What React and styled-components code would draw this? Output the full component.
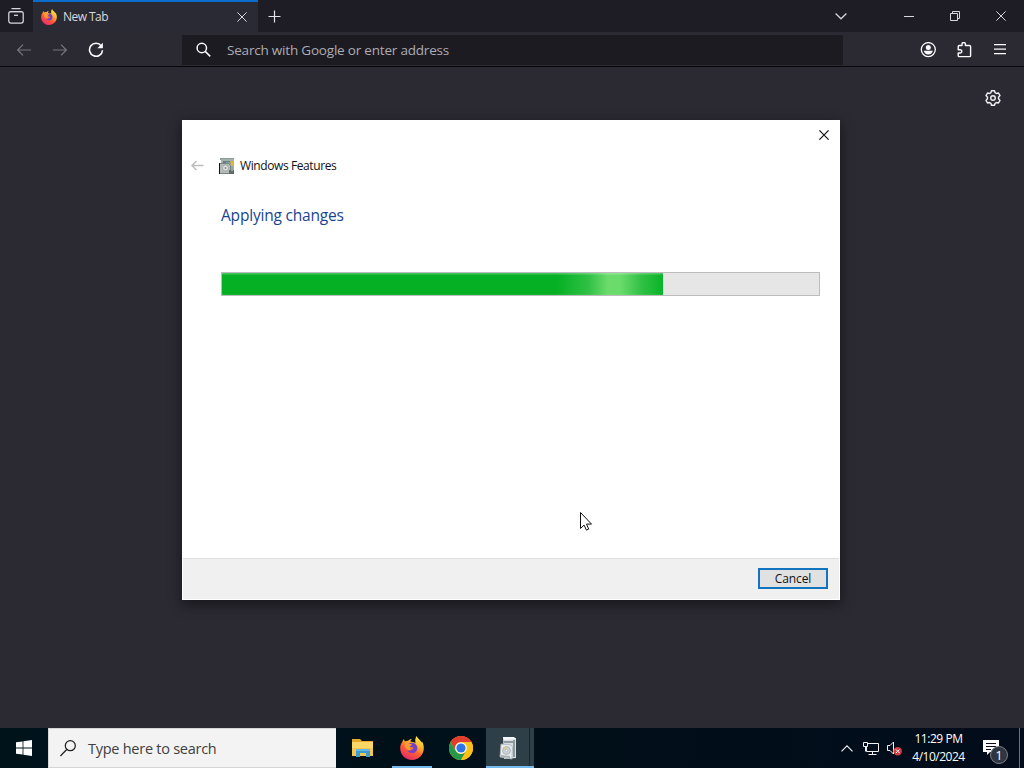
import React from 'react';
import styled, { createGlobalStyle } from 'styled-components';

const Global = createGlobalStyle`
  *, *::before, *::after { box-sizing: border-box; }
  html, body { margin: 0; padding: 0; background: #2b2a33; overflow: hidden; }
  body { font-family: "Open Sans", "Noto Sans", sans-serif; }
  svg { display: block; flex: none; }
  button { font: inherit; padding: 0; border: 0; background: none; color: inherit; }
`;

const Desktop = styled.div`
  position: relative;
  width: 1024px;
  height: 768px;
  display: flex;
  flex-direction: column;
  overflow: hidden;
  background: #2b2a33;
`;

const Label = styled.span`
  font-size: ${(p) => p.$size}px;
  line-height: ${(p) => p.$line || 16}px;
  letter-spacing: ${(p) => p.$track || 0}px;
  color: ${(p) => p.$color};
  white-space: nowrap;
`;

const IconButton = styled.button`
  width: ${(p) => p.$w}px;
  height: 100%;
  flex: none;
  display: flex;
  align-items: center;
  justify-content: center;
  color: ${(p) => p.$color || '#fbfbfe'};
`;

const Spacer = styled.div`
  flex: 1;
`;

const TabStrip = styled.div`
  height: 32px;
  display: flex;
  background: #1e1d25;
`;

const Tab = styled.div`
  width: 225px;
  display: flex;
  align-items: center;
  margin-left: 1px;
  padding: 0 8px 1px 8px;
  gap: 6px;
  background: #2a2a34;
  border-top: 2px solid #0a6ccb;
`;

const WindowControls = styled.div`
  display: flex;
  margin-left: 22px;
`;

const NavBar = styled.div`
  height: 35px;
  display: flex;
  align-items: center;
  padding: 2px 6px 0;
  background: #2b2a33;
  border-bottom: 1px solid #08080b;
`;

const AddressBar = styled.div`
  width: 661px;
  height: 30px;
  margin: 0 67px 0 68px;
  padding: 0 13px;
  display: flex;
  align-items: center;
  gap: 15px;
  color: #fbfbfe;
  background: #1c1b22;
`;

const Page = styled.main`
  flex: 1;
  display: flex;
  justify-content: flex-end;
  align-items: flex-start;
  padding: 22px 22px 0 0;
`;

const Dialog = styled.section`
  position: absolute;
  left: 182px;
  top: 120px;
  width: 658px;
  height: 480px;
  display: flex;
  flex-direction: column;
  background: #fff;
  border: 1px solid #fff;
  box-shadow: 0 4px 12px 1px rgba(0, 0, 0, 0.45);
`;

const DialogTop = styled.div`
  height: 28px;
  display: flex;
  justify-content: flex-end;
`;

const DialogHeader = styled.div`
  height: 34px;
  display: flex;
  align-items: center;
  padding-left: 7px;
`;

const DialogTitle = styled.div`
  display: flex;
  align-items: center;
  gap: 5px;
  margin-left: 15px;
`;

const DialogBody = styled.div`
  flex: 1;
  display: flex;
  flex-direction: column;
  padding: 20px 19px 0 38px;
`;

const Progress = styled.div`
  height: 24px;
  margin-top: 45px;
  background: #e6e6e6;
  border: 1px solid #bcbcbc;
`;

const ProgressFill = styled.div`
  width: 441px;
  height: 100%;
  background:
    linear-gradient(to bottom, rgba(255, 255, 255, 0.25) 0 1px, transparent 2px 21px, rgba(255, 255, 255, 0.12) 22px),
    linear-gradient(to right, #06b025 0 335px, #2fc044 366px, #6bdc6c 386px, #6bdc6c 398px, #2fc044 420px, #0ab428 441px);
`;

const DialogFooter = styled.div`
  height: 41px;
  display: flex;
  align-items: center;
  justify-content: flex-end;
  padding: 0 11px 1px 0;
  background: #f0f0f0;
  border-top: 1px solid #dfdfdf;
`;

const CancelButton = styled.button`
  width: 70px;
  height: 21px;
  display: flex;
  align-items: center;
  justify-content: center;
  background: #e1e1e1;
  border: 2px solid #1273be;
`;

const Cursor = styled.svg`
  position: absolute;
  left: 579px;
  top: 511px;
`;

const Taskbar = styled.footer`
  height: 40px;
  display: flex;
  background: linear-gradient(to right, #00131b, #010f19 60%, #020c1b);
`;

const SearchBox = styled.div`
  width: 288px;
  display: flex;
  align-items: center;
  gap: 12px;
  padding: 1px 0 0 11px;
  margin-right: 2px;
  background: #f3f3f3;
  border: 1px solid #d5d5d5;
  border-width: 1px 0 1px 1px;
`;

const TaskButton = styled.button`
  position: relative;
  width: ${(p) => p.$w || 49}px;
  display: flex;
  align-items: center;
  justify-content: center;
  padding-right: ${(p) => (p.$active ? 3 : 0)}px;
  background: ${(p) => (p.$active ? 'linear-gradient(to right, #2f3f48 43px, #16252e 43px 44px, #2f3f48 44px)' : 'none')};
  &::after {
    content: '';
    position: absolute;
    bottom: 0;
    left: ${(p) => (p.$active ? 0 : 5)}px;
    right: ${(p) => (p.$active ? 0 : 4)}px;
    height: 2px;
    background: ${(p) => (p.$running || p.$active ? '#76b9ed' : 'transparent')};
  }
`;

const Clock = styled.div`
  width: 67px;
  display: flex;
  flex-direction: column;
  align-items: center;
  padding-top: 2px;
`;

const Notifications = styled.div`
  position: relative;
  width: 47px;
  display: flex;
  padding: 11px 0 0 11px;
`;

const Badge = styled.span`
  position: absolute;
  left: 18px;
  top: 18px;
  width: 18px;
  height: 18px;
  border-radius: 50%;
  background: #303641;
  border: 1px solid #7b7f86;
  color: #fff;
  font-size: 13px;
  line-height: 16px;
  text-align: center;
`;

const ShowDesktop = styled.div`
  width: 5px;
  border-left: 1px solid #6c7079;
`;

const Line = ({ w = 16, h = 16, sw = 1, children }) => (
  <svg width={w} height={h} viewBox={`0 0 ${w} ${h}`} fill="none" stroke="currentColor" strokeWidth={sw}>
    {children}
  </svg>
);

const Cross = ({ size = 10, sw = 1 }) => (
  <Line w={size} h={size} sw={sw}>
    <path d={`M.4 .4L${size - 0.4} ${size - 0.4}M${size - 0.4} .4L.4 ${size - 0.4}`} />
  </Line>
);

const Firefox = ({ size, id }) => (
  <svg width={size} height={size} viewBox="0 0 24 24">
    <defs>
      <linearGradient id={id} x1=".8" y1="0" x2=".25" y2="1">
        <stop offset="0" stopColor="#fff24a" />
        <stop offset=".35" stopColor="#ffb02a" />
        <stop offset=".62" stopColor="#ff5a35" />
        <stop offset="1" stopColor="#e32670" />
      </linearGradient>
    </defs>
    <path
      fill={`url(#${id})`}
      d="M2.3 6.1C2.6 4.8 3.4 3.7 4 3.1c.1 1.1.5 1.7 1.1 2.3 1-.6 2-.8 3-.7C9.200 3.600 10.700 2.900 12 3c-1 .6-1.500 1.600-1.600 2.500C12 6 14.300 6 15.600 7c-.7-2.300-.5-4.800 1-6.900 1 2.700 3.800 3.700 5 6.500.3-.3.3-1 .2-1.500 1.300 2.100 2 4.500 2 7C23.800 18.700 18.700 24 12 24S.2 18.800.2 12.300c0-2.400.8-4.600 2.100-6.200z"
    />
    <path fill="#7642c5" d="M8.200 8.300c1.700-1.500 4.500-2 6.500-.8 3 1.700 3.600 5.700 1.300 8.100-2.300 2.500-6.900 2-8.600-1.200 1.500.7 3 .2 4.200-.7.900-.7 1.700-.7 1.700-1.500 0-.7-1-1-2-1-1.500 0-2.600-.6-3.100-2.900z" />
    <path fill="#ff9a2f" d="M5.100 5.400C7 4.900 8.100 6.200 8.700 7.900c1 .2 2.500-.1 3.300.4-.3 1-1.500 1.500-2.300 2.200-.5 1.300.3 2.600 1.500 3-2.300 1.500-5 .2-6-2.200-.5-1.900-.6-4 0-5.900z" />
  </svg>
);

const Chrome = () => (
  <svg width="24" height="24" viewBox="0 0 24 24">
    <circle cx="12" cy="12" r="12" fill="#fbc116" />
    <path fill="#e33b2e" d="M1.600 6A12 12 0 0 1 22.400 6H12a6 6 0 0 0-5.200 9z" />
    <path fill="#249a48" d="M1.600 6 6.800 15A6 6 0 0 0 12 18a6 6 0 0 0 5.200-3L12 24A12 12 0 0 1 1.600 6z" />
    <path fill="#fbc116" d="M12 6h10.400A12 12 0 0 1 12 24l5.200-9A6 6 0 0 0 12 6z" />
    <circle cx="12" cy="12" r="5.800" fill="#fff" />
    <circle cx="12" cy="12" r="4.600" fill="#2d75e8" />
  </svg>
);

const Explorer = () => (
  <svg width="22" height="18" viewBox="0 0 22 18">
    <path fill="#e6a92c" d="M0 0h8l2 2h11v5H0z" />
    <path fill="#fbd766" d="M0 3h21v14H0z" />
    <path fill="#f4c64b" d="M0 9h21v8H0z" />
    <path fill="#3c9bd3" d="M4 10h14v8h-4v-4H8v4H4z" />
    <path fill="#64b9e4" d="M4 10h14v2H4z" />
  </svg>
);

const FeaturesSmall = () => (
  <svg width="16" height="17" viewBox="0 0 16 17">
    <path fill="#8d9a99" d="M1 0h14v2H1z" />
    <path fill="#a4b0ad" d="M2 1h13v15H2z" />
    <path fill="#687f82" d="M4 3h9v3H4z" />
    <path fill="#d9b64d" d="M11 3h3v5h-2z" />
    <path fill="#6fa7ad" d="M7 4h4v3H7z" />
    <path fill="#b4bbb9" stroke="#7a8381" d="M.5 5.500h9l2 2v8H.5z" />
    <path stroke="#111" d="M.5 5v11" />
    <circle cx="6.500" cy="10" r="3" fill="#dde1e0" stroke="#9aa4a2" strokeWidth=".8" />
    <circle cx="6.500" cy="10" r=".9" fill="#78878a" />
    <path fill="#616c69" d="M10 12h5v4h-5z" />
    <path fill="#90a8a1" d="M12 8h2v5h-2z" />
  </svg>
);

const FeaturesLarge = () => (
  <svg width="19" height="24" viewBox="0 0 19 24">
    <path fill="#d9dee0" d="M4 1 17 2v20L5 23z" />
    <path fill="#f5f6f6" d="M4 1h11l2 2-12 1z" />
    <path fill="#8e9a9f" d="M5 5h10v2H5zM14 4h2v17h-2z" />
    <path fill="#e9ebec" stroke="#aab3b7" strokeWidth=".8" d="M2 8l10 1 1.500 2-.5 12-12-2z" />
    <circle cx="7.500" cy="14.500" r="3.900" fill="#cbd3d6" stroke="#a2acb0" strokeWidth=".8" />
    <path fill="#dfc982" d="M7.500 14.500 4.300 12.500a4 4 0 0 1 3-1.900z" />
    <circle cx="7.500" cy="14.500" r="1.200" fill="#fff" stroke="#98a4aa" strokeWidth=".6" />
    <path fill="#aab2b5" d="m2 19 9 1v2l-9-1z" />
  </svg>
);

export default function App() {
  return (
    <Desktop>
      <Global />
      <TabStrip>
        <IconButton $w={32} $color="#d8d8de">
          <Line sw={1.25}>
            <path d="M3.500 .7h9M1.800 3.500h12.400" />
            <rect x=".8" y="3.500" width="14.400" height="11.600" rx="2" />
            <path d="M6 7.300h4" />
          </Line>
        </IconButton>
        <Tab>
          <Firefox size={16} id="tabFox" />
          <Label $size={12} $color="#d8d8dd" $track={-0.55}>New Tab</Label>
          <Spacer />
          <IconButton $w={16} $color="#d4d4da"><Cross size={10} /></IconButton>
        </Tab>
        <IconButton $w={33} $color="#e4e4e8">
          <Line w={13} h={13} sw={1.2}><path d="M6.500 .5v12M.5 6.500h12" /></Line>
        </IconButton>
        <Spacer />
        <IconButton $w={46} $color="#d0d0d6">
          <Line w={12} h={7} sw={1.35}><path d="m.6.6 5.400 5.200L11.400.6" /></Line>
        </IconButton>
        <WindowControls>
          <IconButton $w={46} $color="#d8d8dc"><Line w={10} h={1}><path d="M0 .5h10" /></Line></IconButton>
          <IconButton $w={46} $color="#d8d8dc">
            <Line w={10} h={10}><path d="M.5 2.500h7v7h-7zM2.500 2.500v-2h7v7h-2" /></Line>
          </IconButton>
          <IconButton $w={46} $color="#d8d8dc"><Cross size={10} /></IconButton>
        </WindowControls>
      </TabStrip>

      <NavBar>
        <IconButton $w={36} $color="#76757e">
          <Line w={14} h={12} sw={1.2}><path d="M14 6H.8M6 .6.7 6 6 11.400" /></Line>
        </IconButton>
        <IconButton $w={36} $color="#76757e">
          <Line w={14} h={12} sw={1.2}><path d="M0 6h13.200M8 .6 13.300 6 8 11.400" /></Line>
        </IconButton>
        <IconButton $w={36}>
          <Line sw={1.6}>
            <path d="M13.300 4A6.500 6.500 0 1 0 14.500 8.200" />
            <path d="M14.900 .8v5.500H9.400z" fill="currentColor" stroke="none" />
          </Line>
        </IconButton>
        <AddressBar>
          <Line w={17} h={16} sw={1.5}><circle cx="6.800" cy="6" r="4.700" /><path d="m10.200 9.400 5 5" /></Line>
          <Label $size={13.5} $line={20} $color="#adacb3" $track={-0.2}>Search with Google or enter address</Label>
        </AddressBar>
        <IconButton $w={36}>
          <Line sw={1.3}>
            <circle cx="8.300" cy="7.600" r="7" />
            <circle cx="8.300" cy="5.500" r="2.500" fill="currentColor" stroke="none" />
            <path d="M3.800 8.800h9c-.4 2.300-2.200 3.800-4.500 3.800s-4.100-1.500-4.500-3.800z" fill="currentColor" stroke="none" />
          </Line>
        </IconButton>
        <IconButton $w={36}>
          <Line sw={1.4}>
            <path
              strokeLinejoin="round"
              d="M2.200 4.700c0-.7.400-1.200 1.200-1.200h2.600V2.200a1.700 1.700 0 0 1 3.400 0V3.500h4c.7 0 1.200.4 1.200 1.200v8.700c0 .7-.5 1.200-1.200 1.200h-10c-.8 0-1.200-.5-1.200-1.200v-2.400h2a1.650 1.650 0 0 0 0-3.300h-2z"
            />
          </Line>
        </IconButton>
        <IconButton $w={36}>
          <Line w={12} h={12} sw={1.3}><path d="M0 .7h12M0 5.200h12M0 9.700h12" /></Line>
        </IconButton>
      </NavBar>

      <Page>
        <Line w={18} h={18} sw={1.4}>
          <path strokeLinejoin="round" d="M7.500 1.700h3l.6 2 1.300.8 2.100-.5 1.500 2.600-1.500 1.600v1.600l1.500 1.600-1.500 2.600-2.100-.5-1.300.8-.6 2h-3l-.6-2-1.300-.8-2.100.5L2 11.400l1.500-1.600V8.200L2 6.600 3.500 4l2.100.5 1.300-.8z" stroke="#f0f0f4" />
          <circle cx="9" cy="9" r="2.300" stroke="#f0f0f4" />
        </Line>
      </Page>

      <Taskbar>
        <IconButton $w={48}>
          <svg width="16" height="16" viewBox="0 0 16 16" fill="#fff">
            <path d="M0 2.300 6.600 1.400v6.200H0zM7.400 1.300 16 0v7.600H7.400zM0 8.400h6.600v6.200L0 13.700zM7.400 8.400H16V16l-8.600-1.300z" />
          </svg>
        </IconButton>
        <SearchBox>
          <svg width="16" height="17" viewBox="0 0 16 17" fill="none" stroke="#202020" strokeWidth="1.250">
            <circle cx="10.300" cy="5.700" r="5" />
            <path d="M6.700 9.500.4 16" />
          </svg>
          <Label $size={14.5} $line={20} $color="#404040" $track={-0.26}>Type here to search</Label>
        </SearchBox>
        <TaskButton><Explorer /></TaskButton>
        <TaskButton $running><Firefox size={24} id="taskFox" /></TaskButton>
        <TaskButton $w={50}><Chrome /></TaskButton>
        <TaskButton $active $w={48}><FeaturesLarge /></TaskButton>
        <Spacer />
        <IconButton $w={24} $color="#f0f0f2">
          <Line w={12} h={7} sw={1.2}><path d="M.5 6.400 6 .9l5.500 5.500" /></Line>
        </IconButton>
        <IconButton $w={24} $color="#f0f0f2">
          <Line w={16} h={14}>
            <path d="M4.500 2.500h11v8h-12v-5M9.500 10.500v3M5.500 13.500h8M.5 1.500h4v4h-4zM2.500 5.500v5" />
          </Line>
        </IconButton>
        <IconButton $w={22} $color="#f0f0f2">
          <Line w={16} h={16}>
            <path d="M1.500 5.500H4L7.500 2v12L4 10.500H1.500z" />
            <circle cx="11.700" cy="11.200" r="4.200" fill="#d43b40" stroke="none" />
            <path d="m9.900 9.400 3.600 3.600m0-3.600-3.600 3.600" stroke="#fff" />
          </Line>
        </IconButton>
        <Clock>
          <Label $size={12} $line={18} $color="#fff" $track={-0.45}>11:29 PM</Label>
          <Label $size={12} $line={18} $color="#fff" $track={-0.5}>4/10/2024</Label>
        </Clock>
        <Notifications>
          <svg width="16" height="16" viewBox="0 0 16 16">
            <path fill="#fff" d="M0 1h16v12H7l-3 3v-3H0z" />
            <path stroke="#07101c" d="M3 4.500h10M3 7.500h10M3 10.500h5" />
          </svg>
          <Badge>1</Badge>
        </Notifications>
        <ShowDesktop />
      </Taskbar>

      <Dialog>
        <DialogTop>
          <IconButton $w={31} $color="#111"><Cross size={10} sw={1.2} /></IconButton>
        </DialogTop>
        <DialogHeader>
          <Line w={14} h={12} sw={1.5}><path stroke="#bdbdbd" d="M13.500 5.500H2M6.500 1 2 5.500 6.500 10" /></Line>
          <DialogTitle>
            <FeaturesSmall />
            <Label $size={12} $color="#111" $track={-0.4}>Windows Features</Label>
          </DialogTitle>
        </DialogHeader>
        <DialogBody>
          <Label $size={15.5} $line={24} $color="#1a4492" $track={-0.2}>Applying changes</Label>
          <Progress><ProgressFill /></Progress>
        </DialogBody>
        <DialogFooter>
          <CancelButton><Label $size={12} $color="#111" $track={-0.1}>Cancel</Label></CancelButton>
        </DialogFooter>
      </Dialog>

      <Cursor width="14" height="21" viewBox="0 0 14 21">
        <path d="M1.500 1.500v16l3.600-3.400 2.300 5 2.300-1-2.200-5h5z" fill="#fff" stroke="#111" />
      </Cursor>
    </Desktop>
  );
}
